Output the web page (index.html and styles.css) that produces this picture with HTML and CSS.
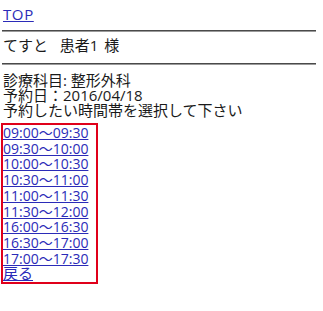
FILE: index.html
```html
<!DOCTYPE html>
<html lang="ja">
<head>
<meta charset="utf-8">
<title>予約</title>
<link rel="stylesheet" href="styles.css">
</head>
<body>
<div class="page">
  <div class="top"><a href="#">TOP</a></div>
  <hr class="rule">
  <div class="name">てすと&nbsp; 患者1 様</div>
  <hr class="rule rule-2">
  <div class="info">
    <div>診療科目:&nbsp;整形外科</div>
    <div>予約日：2016/04/18</div>
    <div>予約したい時間帯を選択して下さい</div>
  </div>
  <div class="slots">
    <a class="slot" href="#">09:00〜09:30</a>
    <a class="slot" href="#">09:30〜10:00</a>
    <a class="slot" href="#">10:00〜10:30</a>
    <a class="slot" href="#">10:30〜11:00</a>
    <a class="slot" href="#">11:00〜11:30</a>
    <a class="slot" href="#">11:30〜12:00</a>
    <a class="slot" href="#">16:00〜16:30</a>
    <a class="slot" href="#">16:30〜17:00</a>
    <a class="slot" href="#">17:00〜17:30</a>
    <a class="slot back" href="#">戻る</a>
  </div>
</div>
</body>
</html>
```

FILE: styles.css
```css
html, body {
  margin: 0;
  padding: 0;
  background: #ffffff;
}

body {
  font-family: "Open Sans", "Noto Sans CJK JP", sans-serif;
  font-size: 15px;
  color: #1a1a1a;
}

.page {
  padding: 4px 7px 0 3px;
}

a {
  color: #2b2bb8;
  text-decoration: underline;
}

.top {
  line-height: 20px;
  letter-spacing: 0.6px;
}

.rule {
  margin: 6px 0 0 -1px;
  height: 0;
  border: 0;
  border-top: 1px solid #4a4a4a;
  border-bottom: 1px solid #9a9a9a;
}

.name {
  margin-top: 3px;
  line-height: 20px;
  word-spacing: 2px;
}

.rule-2 {
  margin-top: 8px;
}

.info {
  margin-top: 8px;
  line-height: 15px;
}

.slots {
  margin: 5px 0 0 -2px;
  width: 97px;
  box-sizing: border-box;
  border: 2px solid #e0001a;
  display: flex;
  flex-direction: column;
}

.slot {
  display: block;
  font-size: 14px;
  line-height: 15.7px;
  white-space: nowrap;
}

.back {
  font-size: 15px;
}
```
